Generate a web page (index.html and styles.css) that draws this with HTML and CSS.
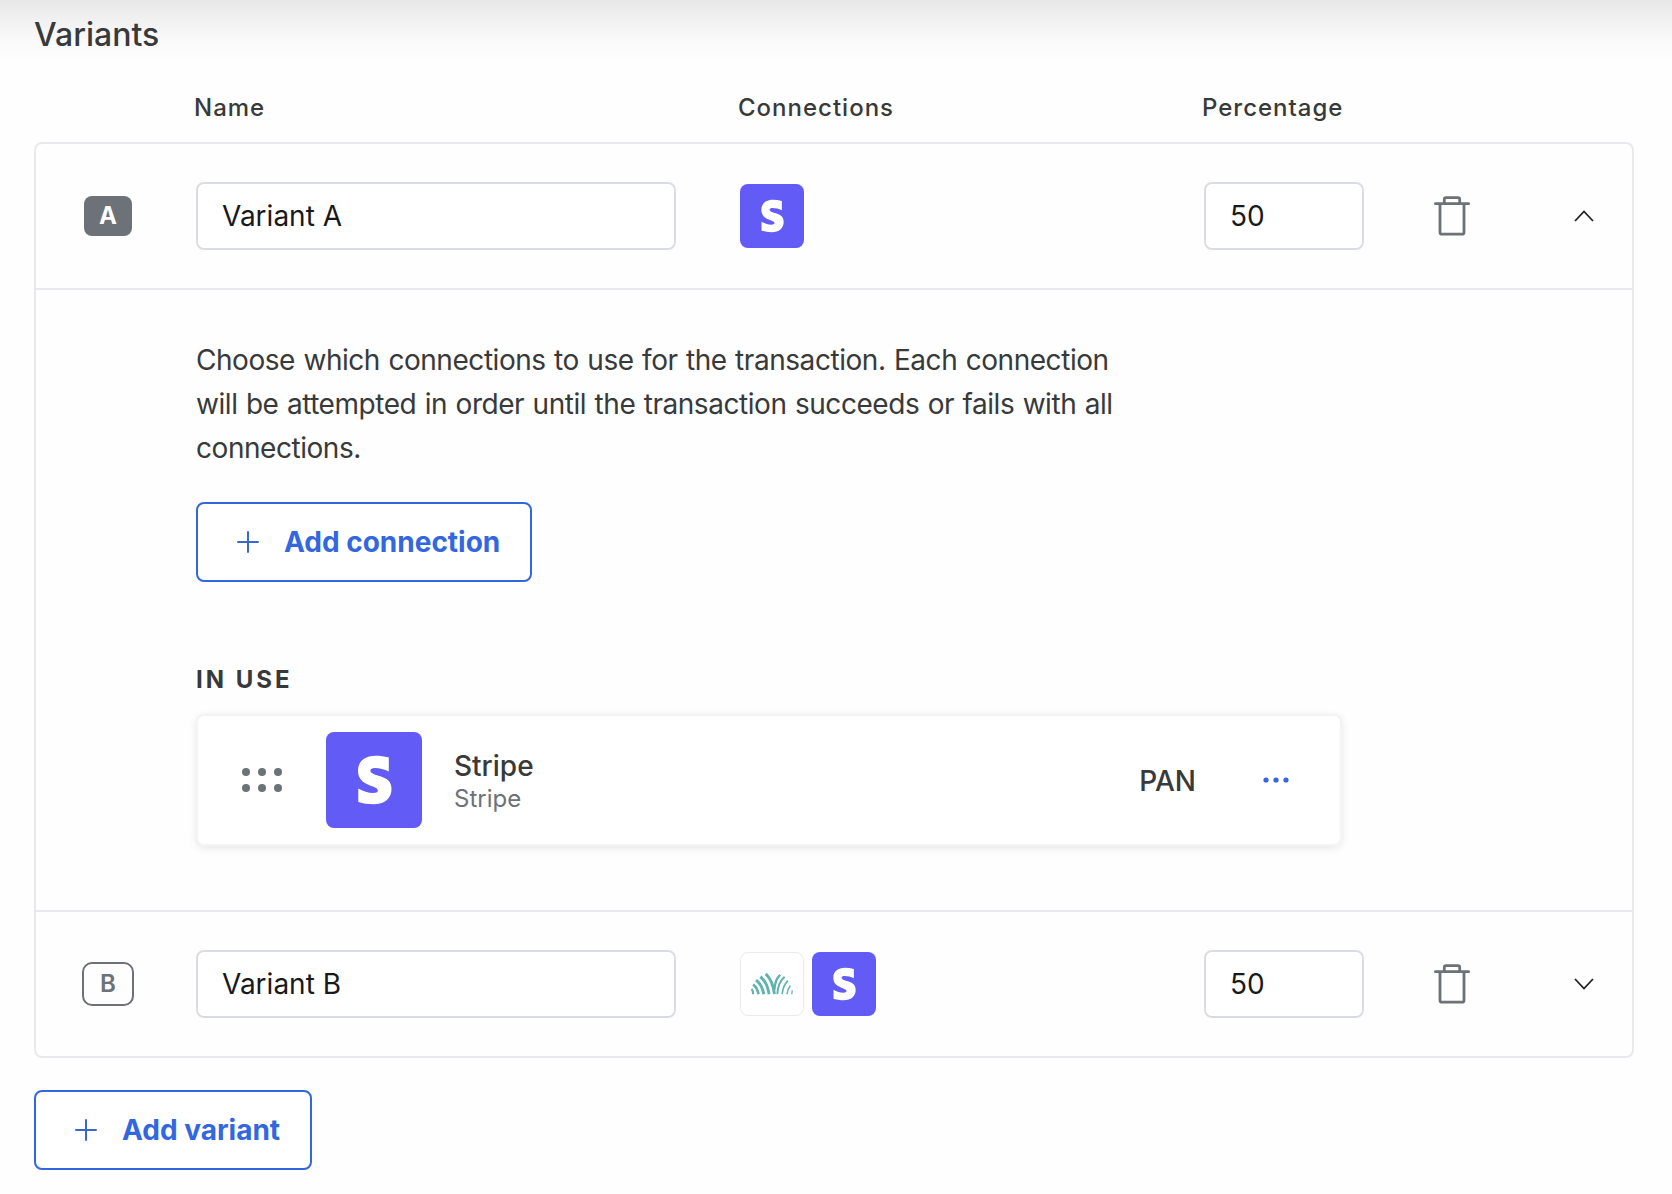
FILE: index.html
```html
<!DOCTYPE html>
<html lang="en">
<head>
<meta charset="utf-8">
<title>Variants</title>
<link rel="stylesheet" href="styles.css">
</head>

<body>

<!-- shared icons -->
<svg class="sprite">
  <symbol id="stripe" viewBox="0 0 96 96">
    <path fill="#fff" d="M48.500 42.500C46 41.300 44.400 40.500 44.400 38.800C44.400 37 46 36 49 36C53.500 36 58.500 37.200 62.800 39.500V25.600C58.500 24.400 54 23.800 49.500 23.800C38.800 23.800 32 29.400 32 38.800C32 46.500 36.500 50.800 44 53.500C49.800 55.500 51.800 56.500 51.800 58.500C51.800 60.300 50 61 47 61C42.500 61 36.800 59.200 32.300 56.500V70C37 71.500 42 72.200 47.500 72.200C58.500 72.200 65.500 66.800 65.500 57C65.500 49.300 61 46.300 53.500 44Z"/>
  </symbol>
  <symbol id="trash" viewBox="0 0 36 40">
    <g fill="none" stroke="#6c7278" stroke-width="2.8">
      <path d="M1.400 7.700H34.600" stroke-linecap="round"/>
      <path d="M10.300 7.500V3.300Q10.300 1.600 12 1.600H24Q25.700 1.600 25.700 3.300V7.500"/>
      <path d="M6 8V36.200Q6 38.200 8 38.200H28Q30 38.200 30 36.200V8"/>
    </g>
  </symbol>
  <symbol id="plus" viewBox="0 0 22 22">
    <path d="M11 1V21M1 11H21" fill="none" stroke="#3a66d0" stroke-width="2" stroke-linecap="round"/>
  </symbol>
</svg>

<main class="page">
  <h1 class="title">Variants</h1>

  <div class="columns">
    <span>Name</span>
    <span>Connections</span>
    <span>Percentage</span>
  </div>

  <div class="variants">
    <div class="row">
      <div class="letter"><span class="badge badge-solid">A</span></div>
      <input class="input" type="text" value="Variant A">
      <div class="logos">
        <svg class="logo"><use href="#stripe"/></svg>
      </div>
      <input class="input" type="text" value="50">
      <svg class="trash"><use href="#trash"/></svg>
      <svg class="chevron" viewBox="0 0 20 12"><path d="M1 11L10 1.500L19 11"/></svg>
    </div>

    <div class="panel">
      <p class="help">Choose which connections to use for the transaction. Each connection will be attempted in order until the transaction succeeds or fails with all connections.</p>
      <button class="button"><svg class="plus"><use href="#plus"/></svg>Add connection</button>

      <h2 class="label">IN USE</h2>
      <div class="connection">
        <svg class="handle" viewBox="0 0 40 24">
          <circle cx="4" cy="4" r="4"/><circle cx="20" cy="4" r="4"/><circle cx="36" cy="4" r="4"/>
          <circle cx="4" cy="20" r="4"/><circle cx="20" cy="20" r="4"/><circle cx="36" cy="20" r="4"/>
        </svg>
        <svg class="logo logo-large"><use href="#stripe"/></svg>
        <div class="about">
          <div class="name">Stripe</div>
          <div class="provider">Stripe</div>
        </div>
        <span class="method">PAN</span>
        <svg class="more" viewBox="0 0 26 6">
          <circle cx="3" cy="3" r="2.600"/><circle cx="13" cy="3" r="2.600"/><circle cx="23" cy="3" r="2.600"/>
        </svg>
      </div>
    </div>

    <div class="row">
      <div class="letter"><span class="badge badge-outline">B</span></div>
      <input class="input" type="text" value="Variant B">
      <div class="logos">
        <svg class="logo logo-light" viewBox="0 0 64 64">
          <g fill="none" stroke="#5fb3b0">
            <path stroke-width="2.200" d="M12.500 42.500Q12.500 39 11 37"/>
            <path stroke-width="2.800" d="M18 42.500Q17 36 12.500 32.500"/>
            <path stroke-width="3" d="M23.500 42.500Q22 33 15.500 28"/>
            <path stroke-width="3" d="M29 42.500Q27 30 20 24.500"/>
            <path stroke-width="3" d="M34.500 42.500Q33 29 25.500 21.500"/>
            <path stroke-width="2.400" d="M34.500 38Q35 27 40.500 22.500"/>
            <path stroke-width="2" d="M37.500 42.500Q38 31 45 24.500"/>
            <path stroke-width="1.700" d="M42.500 42.500Q43 34 48.500 28.500"/>
            <path stroke-width="1.500" d="M47.500 42.500Q48 37 51 33.500"/>
            <path stroke-width="1.300" d="M52.500 42.500Q52.500 40 53 38.500"/>
          </g>
        </svg>
        <svg class="logo"><use href="#stripe"/></svg>
      </div>
      <input class="input" type="text" value="50">
      <svg class="trash"><use href="#trash"/></svg>
      <svg class="chevron" viewBox="0 0 20 12"><path d="M1 1L10 10.500L19 1"/></svg>
    </div>
  </div>

  <button class="button"><svg class="plus"><use href="#plus"/></svg>Add variant</button>
</main>

</body>
</html>
```
FILE: styles.css
```css
* {
  box-sizing: border-box;
}

body {
  margin: 0;
  font-family: Inter, "Liberation Sans", sans-serif;
  font-size: 28px;
  color: #38393b;
  background: #fefefe linear-gradient(#e8e8e8 0, #f1f1f1 20px, #fafafa 42px, #fefefe 66px) no-repeat;
}

svg {
  display: block;
  flex: none;
}

.sprite {
  display: none;
}

.page {
  height: 1194px;
  padding: 15px 38px 0 34px;
}

.title {
  margin: 0;
  font-size: 32px;
  line-height: 40px;
  font-weight: 500;
}

/* header and rows share the same columns */
.columns,
.row {
  display: grid;
  grid-template-columns: 160px 480px 64px 464px 160px 70px 36px 104px 20px;
  align-items: center;
}

.columns {
  height: 87px;
  padding-top: 19px;
  font-size: 24px;
  line-height: 68px;
  font-weight: 500;
  letter-spacing: 1px;
  align-items: start;
}

.columns span:nth-child(1) { grid-column: 2; }
.columns span:nth-child(2) { grid-column: 4; }
.columns span:nth-child(3) { grid-column: 5; }

.variants {
  width: 1600px;
  margin-bottom: 32px;
  border: 2px solid #e8e9ed;
  border-radius: 8px;
}

.row {
  height: 144px;
}

.letter {
  width: 144px;
  text-align: center;
}

.badge {
  display: inline-block;
  border-radius: 8px;
  font-size: 24px;
  font-weight: 600;
  vertical-align: middle;
}

.badge-solid {
  width: 48px;
  height: 40px;
  line-height: 40px;
  font-weight: 700;
  color: #fff;
  background: #6c7278;
}

.badge-outline {
  width: 52px;
  height: 44px;
  line-height: 40px;
  border: 2px solid #6c7278;
  border-radius: 10px;
  color: #6c7278;
}

.input {
  width: 100%;
  height: 68px;
  padding: 0 24px;
  border: 2px solid #d9dde3;
  border-radius: 8px;
  font: inherit;
  color: #18191b;
  background: #fff;
}

.logos {
  grid-column: 4;
  display: flex;
  gap: 8px;
}

.logo {
  width: 64px;
  height: 64px;
  border-radius: 8px;
  background: #635bf6;
}

.logo-large {
  width: 96px;
  height: 96px;
}

.logo-light {
  border: 1px solid #e9ebee;
  background: #fff;
}

.trash {
  grid-column: 7;
  width: 36px;
  height: 40px;
}

.chevron {
  grid-column: 9;
  width: 20px;
  height: 12px;
  fill: none;
  stroke: #222;
  stroke-width: 1.8;
}

.panel {
  height: 624px;
  padding: 48px 160px 0;
  border: solid #e8e9ed;
  border-width: 2px 0;
}

.help {
  width: 940px;
  margin: 0 0 32px;
  line-height: 44px;
  letter-spacing: -.45px;
  word-spacing: 1px;
}

.button {
  display: flex;
  align-items: center;
  height: 80px;
  padding: 0 30px 0 39px;
  border: 2px solid #3267e0;
  border-radius: 8px;
  font: inherit;
  font-weight: 700;
  color: #3267e0;
  background: #fff;
}

.plus {
  width: 22px;
  height: 22px;
  margin-right: 25px;
}

.label {
  margin: 83px 0 21px;
  font-size: 24px;
  line-height: 30px;
  font-weight: 700;
  letter-spacing: 3px;
}

.connection {
  display: flex;
  align-items: center;
  width: 1142px;
  height: 128px;
  margin: 0 2px;
  padding: 0 51px 0 44px;
  border-radius: 6px;
  background: #fff;
  box-shadow: 0 0 0 2px #f3f4f6, 0 2px 8px 1px rgba(0, 0, 0, .12);
}

.handle {
  width: 40px;
  height: 24px;
  margin-right: 44px;
  fill: #6c7278;
}

.about {
  flex: 1;
  margin-left: 32px;
  padding-top: 2px;
}

.name {
  line-height: 36px;
  font-weight: 500;
}

.provider {
  font-size: 24px;
  line-height: 30px;
  color: #6c7278;
}

.method {
  padding-top: 2px;
  font-weight: 500;
}

.more {
  width: 26px;
  height: 6px;
  margin-left: 67px;
  fill: #3267e0;
}
```
